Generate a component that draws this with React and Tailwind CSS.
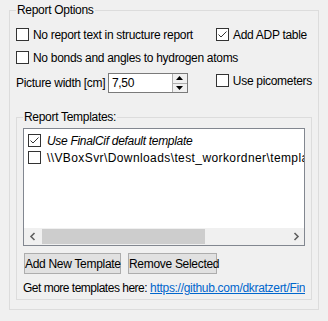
import React from "react";

function Box({ checked }) {
  return (
    <span className="w-[13px] h-[13px] shrink-0 border border-[#333333] bg-white flex items-center justify-center">
      {checked && (
        <svg width="11" height="11" viewBox="0 0 11 11">
          <path d="M1.5 5.5 L4 8 L9.5 2.5" fill="none" stroke="#333333" strokeWidth="1" />
        </svg>
      )}
    </span>
  );
}

function Check({ label, checked, className = "" }) {
  return (
    <label className={"flex items-center gap-[4px] " + className}>
      <Box checked={checked} />
      <span className="whitespace-nowrap">{label}</span>
    </label>
  );
}

function Chevron({ dir }) {
  return (
    <svg width="8" height="9" viewBox="0 0 8 9">
      <path
        d={dir === "left" ? "M5.5 1 L2 4.5 L5.5 8" : "M2.5 1 L6 4.5 L2.5 8"}
        fill="none"
        stroke="#606060"
        strokeWidth="1.6"
      />
    </svg>
  );
}

export default function App() {
  return (
    <div
      className="w-[328px] h-[321px] bg-[#f0f0f0] pt-[2px] pl-[9px] text-[12px] tracking-[-0.3px] text-black overflow-hidden"
      style={{ fontFamily: '"Liberation Sans", Arial, sans-serif' }}
    >
      <fieldset className="w-[310px] min-w-0 h-[308px] border border-[#dcdcdc] px-[6px]">
        <legend className="px-[1px] leading-[16px]">Report Options</legend>

        <div className="mt-[8px] flex h-[17px] items-center">
          <Check label="No report text in structure report" className="w-[200px]" />
          <Check label="Add ADP table" checked />
        </div>
        <div className="mt-[6px] flex h-[17px] items-center">
          <Check label="No bonds and angles to hydrogen atoms" />
        </div>
        <div className="mt-[7px] flex h-[20px] items-start">
          <div className="w-[92px] h-[20px] flex items-center whitespace-nowrap">Picture width [cm]</div>
          <div className="w-[80px] h-[20px] border border-[#7a7a7a] bg-white flex">
            <div className="flex-1 flex items-center pl-[3px]">7,50</div>
            <div className="w-[15px] flex flex-col bg-[#f0f0f0] border-l border-[#adadad]">
              <div className="flex-1 flex items-center justify-center border-b border-[#adadad]">
                <svg width="7" height="4" viewBox="0 0 7 4"><path d="M0 4 L3.5 0 L7 4 Z" fill="#000" /></svg>
              </div>
              <div className="flex-1 flex items-center justify-center">
                <svg width="7" height="4" viewBox="0 0 7 4"><path d="M0 0 L3.5 4 L7 0 Z" fill="#000" /></svg>
              </div>
            </div>
          </div>
          <Check label="Use picometers" className="ml-[28px] h-[15px]" />
        </div>

        <fieldset className="mt-[16px] min-w-0 w-[296px] h-[191px] border border-[#dcdcdc] px-[6px]">
          <legend className="px-[1px] leading-[16px]">Report Templates:</legend>

          <div className="mt-[3px] w-[282px] h-[118px] border border-[#828790] bg-white flex flex-col">
            <div className="flex-1 overflow-hidden pt-[3px] pl-[4px]">
              <div className="flex h-[17px] items-center gap-[6px] whitespace-nowrap">
                <Box checked />
                <span className="italic">Use FinalCif default template</span>
              </div>
              <div className="flex h-[17px] items-center gap-[6px] whitespace-nowrap tracking-[0.4px]">
                <Box />
                <span>\\VBoxSvr\Downloads\test_workordner\templates</span>
              </div>
            </div>
            <div className="h-[17px] bg-[#f0f0f0] flex">
              <div className="w-[17px] flex items-center justify-center">
                <Chevron dir="left" />
              </div>
              <div className="flex-1 py-[1px] pl-[1px]">
                <div className="w-[163px] h-full bg-[#cdcdcd]" />
              </div>
              <div className="w-[17px] flex items-center justify-center">
                <Chevron dir="right" />
              </div>
            </div>
          </div>

          <div className="mt-[7px] ml-[1px] flex gap-[7px]">
            <button className="w-[97px] h-[21px] border border-[#adadad] bg-[#e1e1e1] whitespace-nowrap">
              Add New Template
            </button>
            <button className="w-[89px] h-[21px] border border-[#adadad] bg-[#e1e1e1] whitespace-nowrap">
              Remove Selected
            </button>
          </div>

          <div className="mt-[6px] h-[16px] flex items-center whitespace-nowrap overflow-hidden w-[282px]">
            <span className="tracking-[-0.5px]">Get more templates here:</span>
            <a className="ml-[3px] text-[#0066cc] underline" href="#">
              https://github.com/dkratzert/Fin
            </a>
          </div>
        </fieldset>
      </fieldset>
    </div>
  );
}
